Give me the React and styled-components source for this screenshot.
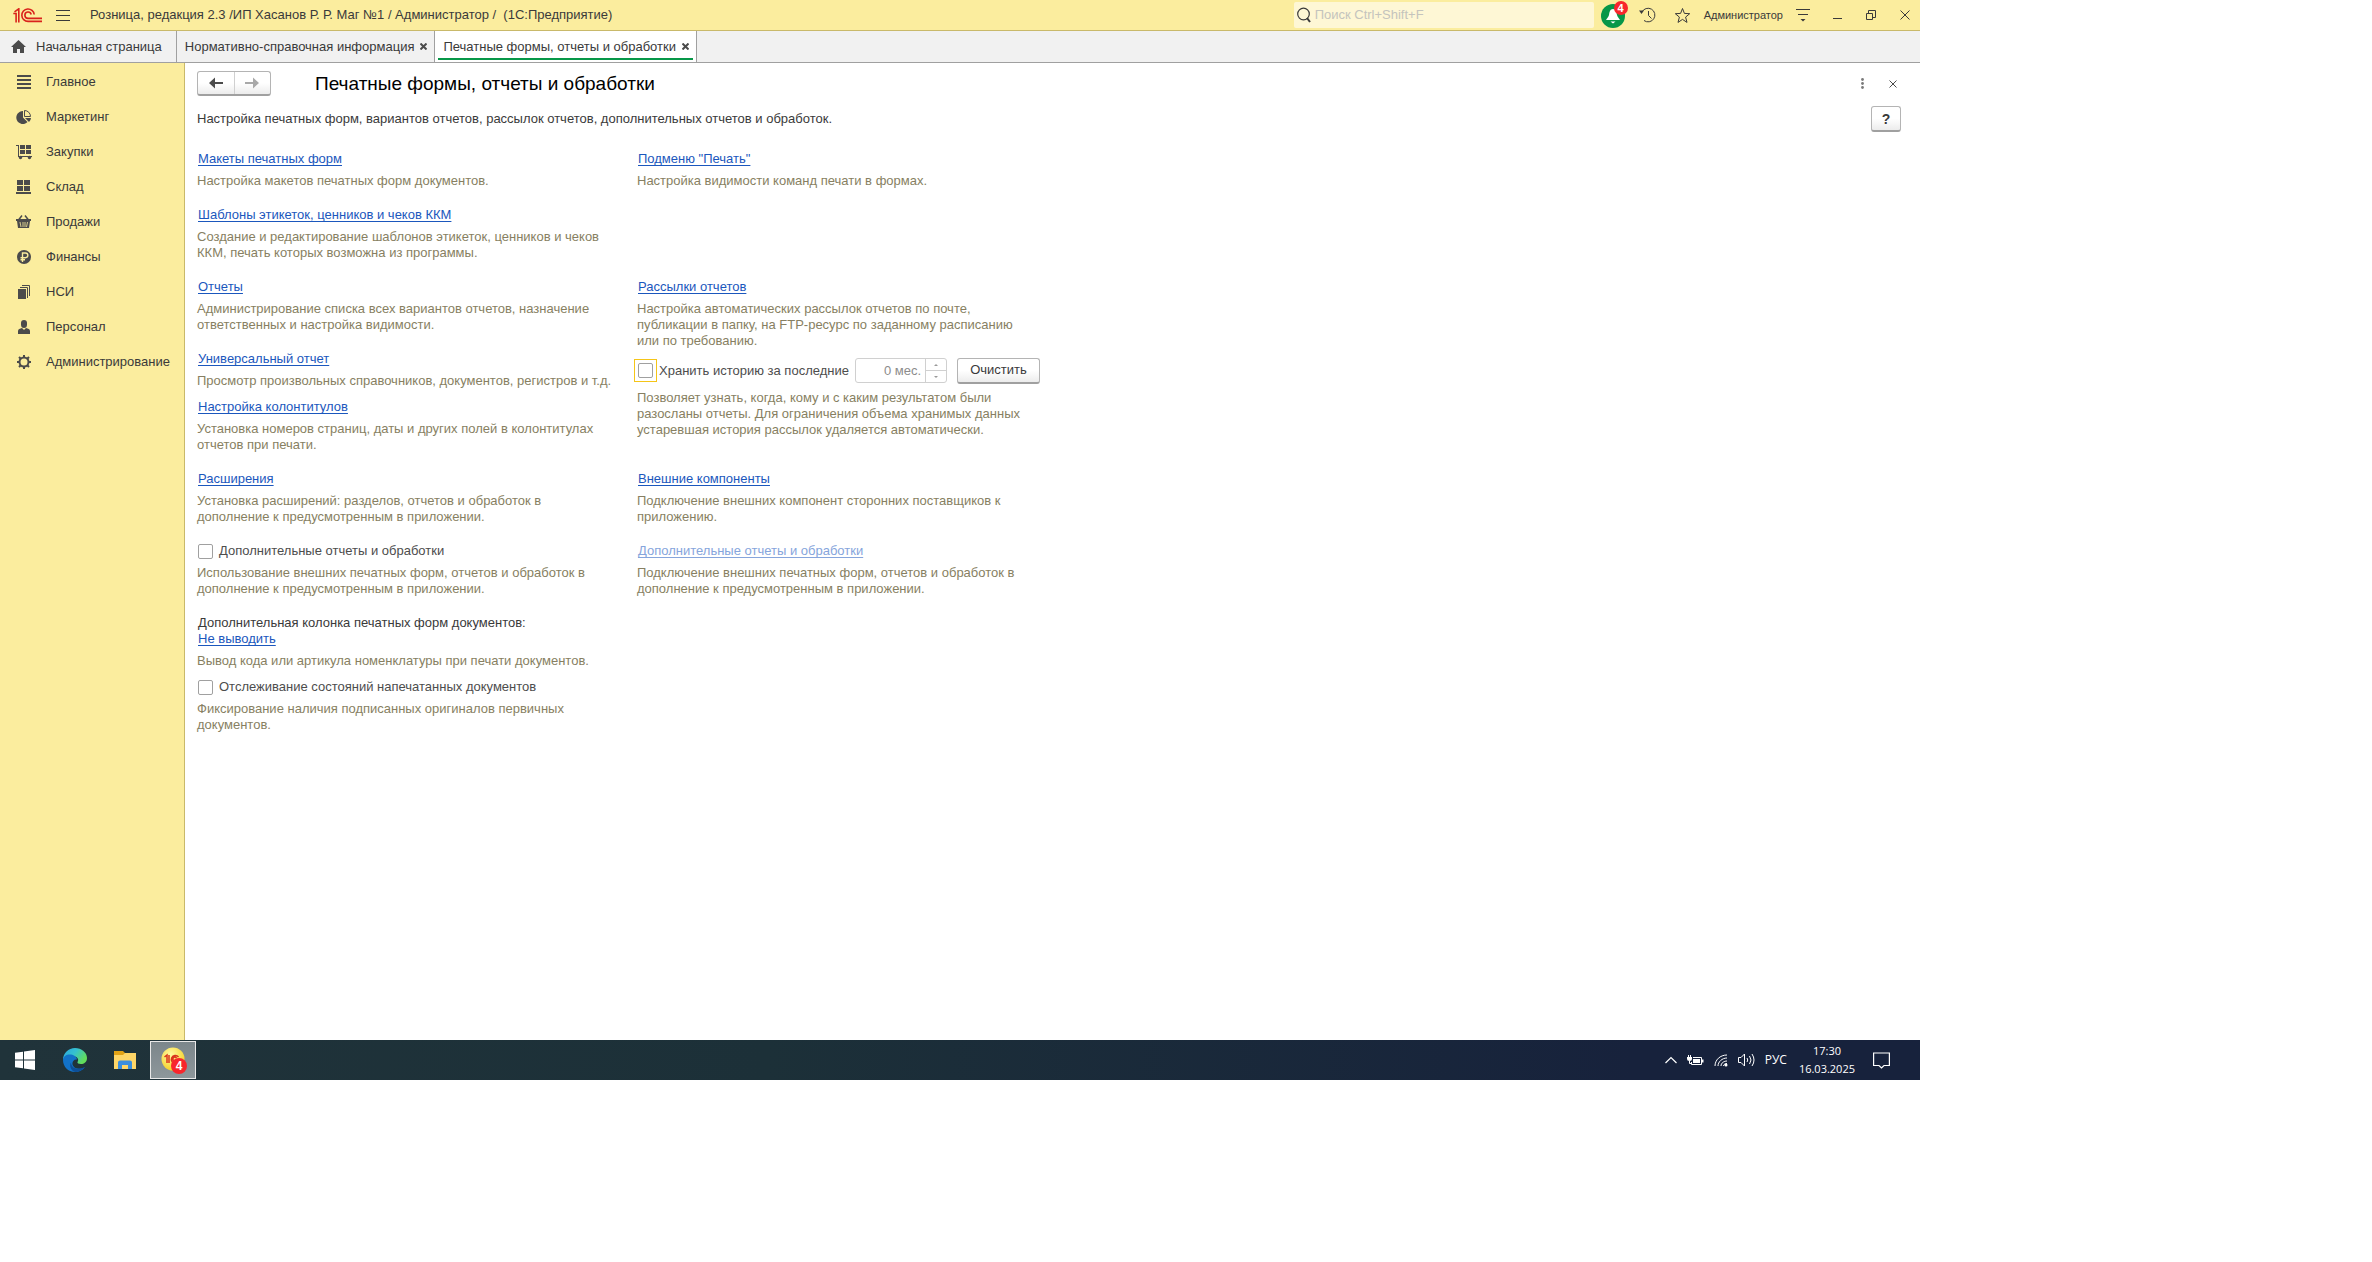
import styled, { createGlobalStyle, css } from "styled-components";

const GlobalStyle = createGlobalStyle`
    *, *::before, *::after {
        box-sizing: border-box;
    }

    body {
        margin: 0;
        background: #ffffff;
        font-family: "Liberation Sans", Arial, sans-serif;
        font-size: 13px;
        line-height: 16px;
        color: #3a3a3a;
    }

    button, input {
        font: inherit;
        color: inherit;
    }

    h1, p {
        margin: 0;
    }
`;

const sections = [
    {
        label: 'Главное',
        icon: <path d="M1 1h14v2H1zM1 5h14v2H1zM1 9h14v2H1zM1 13h14v2H1z" />
    },
    {
        label: 'Маркетинг',
        icon: (
            <>
                <path d="M7 2v6.500l4.500 4.500A6.500 6.500 0 1 1 7 2z" />
                <path d="M8.500 1.500v6h6a6 6 0 0 0-6-6z" fill="none" stroke="#4b4b4b" />
                <path d="M9 9h6a6 6 0 0 1-2 4z" />
            </>
        )
    },
    {
        label: 'Закупки',
        icon: (
            <>
                <path d="M0 1h3v11h13v1H2V2H0z" />
                <path d="M4 1h5v4H4zM10 1h5v4h-5zM4 6h5v4H4zM10 6h5v4h-5z" />
                <circle cx="4.500" cy="13.500" r="1.700" />
                <circle cx="13.500" cy="13.500" r="1.700" />
            </>
        )
    },
    {
        label: 'Склад',
        icon: <path d="M1 1h6v5H1zM8 1h6v5H8zM1 7h6v5H1zM8 7h6v5H8zM0 13h15v2H0z" />
    },
    {
        label: 'Продажи',
        icon: (
            <>
                <path d="M2.500 6L6 1.500M12.500 6L9 1.500" fill="none" stroke="#4b4b4b" strokeWidth="1.500" />
                <path d="M0 5h15v2h-1l-1 7H2L1 7H0z" />
                <path d="M4 8l1 5M7 8v5M9 8v5M11.500 8l-1 5" stroke="#fbed9e" strokeWidth=".8" />
            </>
        )
    },
    {
        label: 'Финансы',
        icon: (
            <>
                <circle cx="8" cy="8" r="7" />
                <path d="M6.500 13V4h3a2.300 2.300 0 0 1 0 4.700H4.500M4.500 10.700H9" fill="none" stroke="#fbed9e" strokeWidth="1.400" />
            </>
        )
    },
    {
        label: 'НСИ',
        icon: (
            <>
                <path d="M2 5h8v10H2z" />
                <path d="M4 3.500h7.500V14M6 1.500h7.500V12" fill="none" stroke="#4b4b4b" />
            </>
        )
    },
    {
        label: 'Персонал',
        icon: (
            <>
                <path d="M5 4a3 3 0 0 1 6 0v1.500a3 3.500 0 0 1-6 0z" />
                <path d="M2 15v-3c0-2 2-2.500 4-3l2 2 2-2c2 .5 4 1 4 3v3z" />
            </>
        )
    },
    {
        label: 'Администрирование',
        icon: (
            <>
                <circle cx="8" cy="8" r="4.500" fill="none" stroke="#4b4b4b" strokeWidth="2" />
                <path d="M8 1v3M8 12v3M1 8h3M12 8h3M3 3l2 2M11 11l2 2M3 13l2-2M11 5l2-2" stroke="#4b4b4b" strokeWidth="2" />
            </>
        )
    }
];

const LogoIcon = () => (
    <svg width="30" height="15" viewBox="0 0 30 15" fill="none" stroke="#d9221c" strokeWidth="1.600">
        <path d="M1.500 3.800L5.800.8V14.500M.3 5.500h2.800v9" />
        <path d="M21.200 6.500A6.200 6.200 0 1 0 15 13.400h14" />
        <path d="M18.200 6.500A3.200 3.200 0 1 0 15 10.400h14" />
    </svg>
);

const MenuIcon = () => (
    <svg width="14" height="13" viewBox="0 0 14 13" stroke="#3a3a3a" strokeWidth="1">
        <path d="M0 1.500h14M0 6.500h14M0 11.500h14" />
    </svg>
);

const HomeIcon = () => (
    <svg width="15" height="13" viewBox="0 0 15 13" fill="#4b4b4b">
        <path d="M7.500 0L15 7h-2v6H9V9H6v4H2V7H0z" />
    </svg>
);

const CrossIcon = ({ size = 7, width = 2, color = '#4b4b4b' }) => (
    <svg width={size} height={size} viewBox={`0 0 ${size} ${size}`} stroke={color} strokeWidth={width}>
        <path d={`M.5 .5L${size - 0.5} ${size - 0.5}M${size - 0.5} .5L.5 ${size - 0.5}`} />
    </svg>
);

const SearchIcon = () => (
    <svg width="14" height="16" viewBox="0 0 14 16" fill="none" stroke="#3a3a3a">
        <circle cx="6.500" cy="7" r="5.800" strokeWidth="1.200" />
        <path d="M10 11l3 4" strokeWidth="2" />
    </svg>
);

const BellIcon = () => (
    <svg width="28" height="28" viewBox="0 0 28 28">
        <circle cx="13" cy="15" r="12" fill="#079748" />
        <path d="M13 8c-3 0-3.500 3-4 6-.3 2-2 3-3 5h14c-1-2-2.700-3-3-5-.5-3-1-6-4-6z" fill="#ffffff" />
        <path d="M10.500 20.500h5l-2.500 2z" fill="#ffffff" />
    </svg>
);

const HistoryIcon = () => (
    <svg width="18" height="18" viewBox="0 0 18 18" fill="none" stroke="#3a3a3a">
        <path d="M3 6A6.800 6.800 0 1 1 5 14.500" />
        <path d="M9.500 5v4.500l3 3" />
        <path d="M0 4.500h5L2.500 8z" fill="#3a3a3a" stroke="none" />
    </svg>
);

const StarIcon = () => (
    <svg width="17" height="17" viewBox="0 0 17 17" fill="none" stroke="#3a3a3a">
        <path d="M8.500 1.500l1.900 4.900 5.300.3-4.100 3.400 1.400 5.300-4.500-3-4.500 3 1.400-5.300L1.300 6.700l5.300-.3z" />
    </svg>
);

const ServiceIcon = () => (
    <svg width="14" height="14" viewBox="0 0 14 14">
        <path d="M0 1.500h14M2 6.500h10" stroke="#3a3a3a" />
        <path d="M4.500 11h5L7 13.500z" fill="#3a3a3a" />
    </svg>
);

const MinimizeIcon = () => (
    <svg width="9" height="10" viewBox="0 0 9 10"><path d="M0 8.500h9" stroke="#3a3a3a" /></svg>
);

const RestoreIcon = () => (
    <svg width="10" height="10" viewBox="0 0 10 10" fill="none" stroke="#3a3a3a">
        <path d="M.5 3.500h6v6h-6zM2.500 3V.5h7v7H7" />
    </svg>
);

const ArrowIcon = ({ color, flip }) => (
    <svg width="14" height="12" viewBox="0 0 14 12" fill={color}>
        <path d={flip ? 'M14 6L8 .5V5H0v2h8v4.500z' : 'M0 6L6 .5V5h8v2H6v4.500z'} />
    </svg>
);

const DotsIcon = () => (
    <svg width="3" height="11" viewBox="0 0 3 11" fill="#7a7a7a">
        <circle cx="1.500" cy="1.500" r="1.400" />
        <circle cx="1.500" cy="5.500" r="1.400" />
        <circle cx="1.500" cy="9.500" r="1.400" />
    </svg>
);

const SpinArrow = ({ down }) => (
    <svg width="4" height="2" viewBox="0 0 4 2" fill="#9a9a9a">
        <path d={down ? 'M0 0h4L2 2z' : 'M0 2h4L2 0z'} />
    </svg>
);

const WindowsIcon = () => (
    <svg width="20" height="20" viewBox="0 0 20 20" fill="#ffffff">
        <path d="M0 2.800L8 1.700v7.800H0zM9 1.500L20 0v9.500H9zM0 10.500h8v7.800l-8-1.100zM9 10.500h11V20L9 18.500z" />
    </svg>
);

const EdgeIcon = () => (
    <svg width="24" height="24" viewBox="0 0 24 24">
        <defs>
            <linearGradient id="edgeTop" x1="0" y1="0" x2="1" y2="0.500">
                <stop offset="0" stopColor="#2ba5e0" />
                <stop offset="0.500" stopColor="#35c1d0" />
                <stop offset="1" stopColor="#62dd5a" />
            </linearGradient>
        </defs>
        <path d="M0 12C0 5 5.500 0 12 0s12 4.500 12 10c0 4-3 6-6 6-2.500 0-4-1-3.500-2 1.500-2 .5-5-3-5.500C6 8 1 9 0 12z" fill="url(#edgeTop)" />
        <path d="M0 12c0-4 4-6 8-5.500 3.500.5 6 3 6 5-5-1-7 7 0 9 3 .8 6 0 8-1.500C19.500 22.500 16 24 12 24 5 24 0 18.500 0 12z" fill="#1272c8" />
        <path d="M8 14.500C8 20 14 22.500 22 19c-3 4-7 5-10 5-4-1.500-6-6-4-9.500z" fill="#0d4f98" />
    </svg>
);

const FolderIcon = () => (
    <svg width="22" height="20" viewBox="0 0 22 20">
        <path d="M0 1h9l2 2h11v5H0z" fill="#e2a215" />
        <path d="M0 5h9l2-2h11v16H0z" fill="#ffd667" />
        <path d="M4 19v-6.500a2 2 0 0 1 2-2h10a2 2 0 0 1 2 2V19h-4v-4H8v4z" fill="#3b8ede" />
    </svg>
);

const CoinIcon = () => (
    <svg width="28" height="28" viewBox="0 0 28 28">
        <defs>
            <radialGradient id="coin" cx="0.400" cy="0.300" r="0.700">
                <stop offset="0" stopColor="#fffba0" />
                <stop offset="1" stopColor="#f5d02a" />
            </radialGradient>
        </defs>
        <circle cx="14" cy="13" r="11.500" fill="url(#coin)" />
        <g fill="none" stroke="#d9341c" strokeWidth="1.500">
            <path d="M5.500 11l2.500-2v8M10 9v8" />
            <path d="M19.500 11a4 4 0 1 0-3 6.500h5M17.500 12a2 2 0 1 0-1 3h4" />
        </g>
    </svg>
);

const ChevronIcon = () => (
    <svg width="12" height="8" viewBox="0 0 12 8" fill="none" stroke="#ffffff" strokeWidth="1.200">
        <path d="M.5 7L6 1.500 11.500 7" />
    </svg>
);

const BatteryIcon = () => (
    <svg width="17" height="13" viewBox="0 0 17 13" fill="none" stroke="#ffffff">
        <path d="M6 3.500h8.500v7h-10V8" />
        <path d="M6 5h7v4H6zM15 5.500h1.500v3H15z" fill="#ffffff" stroke="none" />
        <path d="M0 3h5v1.500a2.500 2.500 0 0 1-5 0z" fill="#ffffff" stroke="none" />
        <path d="M1.500 1v2M3.500 1v2M2.500 7v2.500h2" />
    </svg>
);

const WifiIcon = () => (
    <svg width="14" height="14" viewBox="0 0 14 14" fill="none" stroke="#ffffff">
        <path d="M1 13C1 7 6 2 13 2M4 13c0-4 4-8 9-8M7 13c0-3 3-5 6-5" />
        <path d="M9.500 13c.3-2 2-2.500 3.500-2.500" />
        <circle cx="12" cy="12" r="1.500" fill="#ffffff" stroke="none" />
    </svg>
);

const SpeakerIcon = () => (
    <svg width="17" height="14" viewBox="0 0 17 14" fill="none" stroke="#ffffff">
        <path d="M.5 4.500h2.500L6.500 1v12L3 9.500H.5z" />
        <path d="M9 5q1.500 2 0 4M11.500 3q3 4 0 8M14 1q4 6 0 12" />
    </svg>
);

const NoticeIcon = () => (
    <svg width="17" height="17" viewBox="0 0 17 17" fill="none" stroke="#ffffff" strokeWidth="1.200">
        <path d="M.6 1h15.800v12.500H11L8.500 16 6 13.500H.6z" />
    </svg>
);

const Setting = ({ title, disabled, children }) => (
    <Block>
        <BlockLink href="#" aria-disabled={disabled} $disabled={disabled}>{title}</BlockLink>
        <Description>{children}</Description>
    </Block>
);

const CheckSetting = ({ id, title, children }) => (
    <Block>
        <CheckLine>
            <Checkbox type="checkbox" id={id} />
            <label htmlFor={id}>{title}</label>
        </CheckLine>
        <Description>{children}</Description>
    </Block>
);

export default function App() {
    return (
        <Desktop>
            <GlobalStyle />
            <TitleBar>
                <LogoIcon />
                <IconButton aria-label="Главное меню"><MenuIcon /></IconButton>
                <WindowTitle>Розница, редакция 2.3 /ИП Хасанов Р. Р. Маг №1 / Администратор /&nbsp; (1С:Предприятие)</WindowTitle>
                <SearchBox>
                    <SearchIcon />
                    <SearchInput type="text" placeholder="Поиск Ctrl+Shift+F" aria-label="Поиск" />
                </SearchBox>
                <TitleActions>
                    <BellButton aria-label="Оповещения">
                        <BellIcon />
                        <BellBadge>4</BellBadge>
                    </BellButton>
                    <IconButton aria-label="История"><HistoryIcon /></IconButton>
                    <IconButton aria-label="Избранное"><StarIcon /></IconButton>
                    <UserName>Администратор</UserName>
                    <IconButton aria-label="Сервис"><ServiceIcon /></IconButton>
                </TitleActions>
                <WindowControls>
                    <IconButton aria-label="Свернуть"><MinimizeIcon /></IconButton>
                    <IconButton aria-label="Восстановить"><RestoreIcon /></IconButton>
                    <IconButton aria-label="Закрыть"><CrossIcon size={10} width={1} color="#3a3a3a" /></IconButton>
                </WindowControls>
            </TitleBar>

            <TabBar>
                <HomeTab><HomeIcon />Начальная страница</HomeTab>
                <Tab>
                    Нормативно-справочная информация
                    <IconButton aria-label="Закрыть вкладку"><CrossIcon /></IconButton>
                </Tab>
                <Tab $active>
                    Печатные формы, отчеты и обработки
                    <IconButton aria-label="Закрыть вкладку"><CrossIcon /></IconButton>
                </Tab>
            </TabBar>

            <Workspace>
                <Sidebar>
                    {sections.map(({ label, icon }) => (
                        <SidebarItem key={label} href="#">
                            <svg width="16" height="16" viewBox="0 0 16 16" fill="#4b4b4b">{icon}</svg>
                            {label}
                        </SidebarItem>
                    ))}
                </Sidebar>

                <Form>
                    <FormHeader>
                        <NavGroup>
                            <NavButton aria-label="Назад"><ArrowIcon color="#4b4b4b" /></NavButton>
                            <NavButton aria-label="Вперед"><ArrowIcon color="#a9a9a9" flip /></NavButton>
                        </NavGroup>
                        <FormTitle>Печатные формы, отчеты и обработки</FormTitle>
                        <FormTools>
                            <IconButton aria-label="Еще"><DotsIcon /></IconButton>
                            <IconButton aria-label="Закрыть форму"><CrossIcon size={8} width={1} /></IconButton>
                        </FormTools>
                    </FormHeader>

                    <IntroRow>
                        <p>Настройка печатных форм, вариантов отчетов, рассылок отчетов, дополнительных отчетов и обработок.</p>
                        <HelpButton aria-label="Справка">?</HelpButton>
                    </IntroRow>

                    <SettingsGrid>
                        <Setting title="Макеты печатных форм">Настройка макетов печатных форм документов.</Setting>
                        <Setting title={'Подменю "Печать"'}>Настройка видимости команд печати в формах.</Setting>

                        <Setting title="Шаблоны этикеток, ценников и чеков ККМ">
                            Создание и редактирование шаблонов этикеток, ценников и чеков<br />
                            ККМ, печать которых возможна из программы.
                        </Setting>
                        <div />

                        <Group>
                            <Setting title="Отчеты">
                                Администрирование списка всех вариантов отчетов, назначение<br />
                                ответственных и настройка видимости.
                            </Setting>
                            <TightGroup>
                                <Setting title="Универсальный отчет">
                                    Просмотр произвольных справочников, документов, регистров и т.д.
                                </Setting>
                                <Setting title="Настройка колонтитулов">
                                    Установка номеров страниц, даты и других полей в колонтитулах<br />
                                    отчетов при печати.
                                </Setting>
                            </TightGroup>
                        </Group>
                        <div>
                            <Setting title="Рассылки отчетов">
                                Настройка автоматических рассылок отчетов по почте,<br />
                                публикации в папку, на FTP-ресурс по заданному расписанию<br />
                                или по требованию.
                            </Setting>
                            <HistoryRow>
                                <FocusFrame>
                                    <Checkbox type="checkbox" id="keepHistory" />
                                </FocusFrame>
                                <HistoryLabel htmlFor="keepHistory">Хранить историю за последние</HistoryLabel>
                                <NumberField>
                                    <NumberInput type="text" defaultValue="0 мес." aria-label="Количество месяцев" disabled />
                                    <Spinner>
                                        <SpinButton aria-label="Больше" disabled><SpinArrow /></SpinButton>
                                        <SpinButton aria-label="Меньше" disabled><SpinArrow down /></SpinButton>
                                    </Spinner>
                                </NumberField>
                                <ClearButton>Очистить</ClearButton>
                            </HistoryRow>
                            <Description>
                                Позволяет узнать, когда, кому и с каким результатом были<br />
                                разосланы отчеты. Для ограничения объема хранимых данных<br />
                                устаревшая история рассылок удаляется автоматически.
                            </Description>
                        </div>

                        <Setting title="Расширения">
                            Установка расширений: разделов, отчетов и обработок в<br />
                            дополнение к предусмотренным в приложении.
                        </Setting>
                        <Setting title="Внешние компоненты">
                            Подключение внешних компонент сторонних поставщиков к<br />
                            приложению.
                        </Setting>

                        <CheckSetting id="extraReports" title="Дополнительные отчеты и обработки">
                            Использование внешних печатных форм, отчетов и обработок в<br />
                            дополнение к предусмотренным в приложении.
                        </CheckSetting>
                        <Setting title="Дополнительные отчеты и обработки" disabled>
                            Подключение внешних печатных форм, отчетов и обработок в<br />
                            дополнение к предусмотренным в приложении.
                        </Setting>

                        <TightGroup>
                            <div>
                                <FieldCaption>Дополнительная колонка печатных форм документов:</FieldCaption>
                                <Setting title="Не выводить">Вывод кода или артикула номенклатуры при печати документов.</Setting>
                            </div>
                            <CheckSetting id="trackState" title="Отслеживание состояний напечатанных документов">
                                Фиксирование наличия подписанных оригиналов первичных<br />
                                документов.
                            </CheckSetting>
                        </TightGroup>
                    </SettingsGrid>
                </Form>
            </Workspace>

            <Taskbar>
                <TaskButton aria-label="Пуск"><WindowsIcon /></TaskButton>
                <TaskButton aria-label="Edge"><EdgeIcon /></TaskButton>
                <TaskButton aria-label="Проводник"><FolderIcon /></TaskButton>
                <TaskButton aria-label="1С:Предприятие" $active>
                    <CoinIcon />
                    <CoinBadge>4</CoinBadge>
                </TaskButton>
                <Tray>
                    <ChevronIcon />
                    <BatteryIcon />
                    <WifiIcon />
                    <SpeakerIcon />
                    <Language>РУС</Language>
                    <Clock>
                        <span>17:30</span>
                        <span>16.03.2025</span>
                    </Clock>
                    <NoticeIcon />
                </Tray>
            </Taskbar>
        </Desktop>
    );
}

const Desktop = styled.div`
    display: flex;
    flex-direction: column;
    max-width: 1920px;
    min-height: 1080px;
`;

const Buttons = styled.button`
    border: none;
    background: none;
    padding: 0;
    cursor: pointer;
`;

const IconButton = styled(Buttons)`
    display: flex;
    align-items: center;
    justify-content: center;
`;

const TitleBar = styled.header`
    display: flex;
    align-items: center;
    height: 31px;
    padding: 0 10px 0 13px;
    background: #fbed9e;
    border-bottom: 1px solid #c9b96a;

    > button {
        margin-left: 13px;
    }
`;

const WindowTitle = styled.div`
    margin-left: 20px;
    flex: 1;
    white-space: pre;
`;

const SearchBox = styled.div`
    display: flex;
    align-items: center;
    gap: 4px;
    width: 300px;
    height: 26px;
    padding-left: 3px;
    background: #fef7d5;
    border-radius: 2px;
`;

const SearchInput = styled.input`
    flex: 1;
    border: none;
    outline: none;
    padding: 0;
    background: none;

    &::placeholder {
        color: #c4c4bd;
    }
`;

const TitleActions = styled.div`
    display: flex;
    align-items: center;
    gap: 17px;
    margin-left: 6px;
`;

const BellButton = styled(IconButton)`
    position: relative;
    margin-right: -6px;
`;

const badge = css`
    position: absolute;
    display: flex;
    align-items: center;
    justify-content: center;
    border-radius: 50%;
    background: #f8262c;
    color: #ffffff;
    font-family: "Liberation Sans", Arial, sans-serif;
    font-weight: bold;
`;

const BellBadge = styled.span`
    ${badge}
    top: 0;
    right: 0;
    width: 14px;
    height: 14px;
    font-size: 11px;
`;

const UserName = styled.span`
    font-size: 11px;
    margin: 0 -4px;
`;

const WindowControls = styled.div`
    display: flex;
    align-items: center;
    gap: 24px;
    margin-left: 23px;
`;

const TabBar = styled.nav`
    display: flex;
    height: 32px;
    background: #f1f1f1;
    border-bottom: 1px solid #a0a0a0;
`;

const Tab = styled.div`
    display: flex;
    align-items: center;
    gap: 6px;
    padding: 0 7px 0 8px;
    border-right: 1px solid #a0a0a0;
    background: ${props => props.$active ? '#ffffff' : 'none'};
    position: relative;

    &::after {
        content: '';
        display: ${props => props.$active ? 'block' : 'none'};
        position: absolute;
        left: 3px;
        right: 3px;
        bottom: 2px;
        height: 2px;
        background: #079748;
    }
`;

const HomeTab = styled(Tab)`
    gap: 10px;
    padding: 0 14px 0 11px;
`;

const Workspace = styled.div`
    display: flex;
    flex: 1;
`;

const Sidebar = styled.nav`
    width: 185px;
    padding-top: 1px;
    background: #fbed9e;
    border-right: 1px solid #c9b96a;
`;

const SidebarItem = styled.a`
    display: flex;
    align-items: center;
    gap: 14px;
    height: 35px;
    padding-left: 16px;
    color: inherit;
    text-decoration: none;
`;

const Form = styled.main`
    flex: 1;
    padding: 8px 19px 20px 12px;
`;

const FormHeader = styled.div`
    display: flex;
    align-items: center;
    height: 25px;
`;

const raised = css`
    border: 1px solid #b4b4b4;
    border-bottom: 2px solid #a0a0a0;
    border-radius: 3px;
    background: linear-gradient(#ffffff 50%, #ececec);
`;

const NavGroup = styled.div`
    ${raised}
    display: flex;
    width: 74px;
    height: 25px;
`;

const NavButton = styled(IconButton)`
    flex: 1;

    & + & {
        border-left: 1px solid #d0d0d0;
    }
`;

const FormTitle = styled.h1`
    margin-left: 44px;
    font-size: 19px;
    font-weight: normal;
    line-height: 24px;
    color: #000000;
`;

const FormTools = styled.div`
    display: flex;
    align-items: center;
    gap: 25px;
    margin-left: auto;
    padding-right: 4px;
`;

const IntroRow = styled.div`
    display: flex;
    align-items: center;
    justify-content: space-between;
    margin: 10px 0 19px;
`;

const HelpButton = styled(Buttons)`
    ${raised}
    width: 30px;
    height: 26px;
    font-size: 14px;
    font-weight: bold;
`;

const SettingsGrid = styled.div`
    display: grid;
    grid-template-columns: 440px 1fr;
    row-gap: 18px;
`;

const Group = styled.div`
    display: flex;
    flex-direction: column;
    gap: 18px;
`;

const TightGroup = styled(Group)`
    gap: 10px;
`;

const Block = styled.div`
    display: flex;
    flex-direction: column;
    align-items: flex-start;
    gap: 6px;
`;

const BlockLink = styled.a`
    margin-left: 1px;
    color: ${props => props.$disabled ? '#86a5dc' : '#1b57bd'};
    text-decoration: underline;
    text-underline-offset: 2px;
    text-decoration-skip-ink: none;
`;

const Description = styled.p`
    color: #877f62;
`;

const FieldCaption = styled.p`
    margin-left: 1px;
`;

const CheckLine = styled.div`
    display: flex;
    align-items: center;
    gap: 6px;
    height: 16px;
    margin-left: 1px;
    color: #4d4d4d;
`;

const Checkbox = styled.input`
    appearance: none;
    width: 15px;
    height: 15px;
    margin: 0;
    border: 1px solid #a0a0a0;
    border-radius: 2px;
    background: #ffffff;
`;

const HistoryRow = styled.div`
    display: flex;
    align-items: center;
    height: 27px;
    margin: 8px 0 6px -3px;
`;

const FocusFrame = styled.span`
    display: flex;
    align-items: center;
    justify-content: center;
    width: 23px;
    height: 23px;
    border: 1px solid #f5c518;
`;

const HistoryLabel = styled.label`
    width: 198px;
    padding-left: 2px;
    color: #4d4d4d;
`;

const NumberField = styled.div`
    display: flex;
    width: 92px;
    height: 25px;
    border: 1px solid #d0d0d0;
    border-radius: 3px;
`;

const NumberInput = styled.input`
    flex: 1;
    min-width: 0;
    border: none;
    padding: 0 4px;
    background: none;
    text-align: right;
    color: #8c8c8c;
`;

const Spinner = styled.div`
    display: flex;
    flex-direction: column;
    width: 21px;
    border-left: 1px solid #d0d0d0;
`;

const SpinButton = styled(IconButton)`
    flex: 1;

    & + & {
        border-top: 1px solid #d0d0d0;
    }
`;

const ClearButton = styled(Buttons)`
    ${raised}
    width: 83px;
    height: 26px;
    margin-left: 10px;
`;

const Taskbar = styled.footer`
    display: flex;
    align-items: center;
    height: 40px;
    background: linear-gradient(90deg, #20333a, #1c3038 40%, #17223c 85%);
    color: #ffffff;
    font-family: "Open Sans", "Segoe UI", sans-serif;
    font-size: 11px;
`;

const TaskButton = styled(IconButton)`
    position: relative;
    width: 50px;
    height: 40px;

    ${props => props.$active && css`
        width: 46px;
        height: 38px;
        border: 1px solid #e8e8e8;
        background: linear-gradient(#7b868b, #8d979b);
    `}
`;

const CoinBadge = styled.span`
    ${badge}
    right: 8px;
    bottom: 4px;
    width: 16px;
    height: 16px;
    font-size: 12px;
`;

const Tray = styled.div`
    display: flex;
    align-items: center;
    gap: 10px;
    margin-left: auto;
    padding-right: 30px;
`;

const Language = styled.span`
    font-size: 12px;
`;

const Clock = styled.div`
    display: flex;
    flex-direction: column;
    align-items: center;
    line-height: 18px;
    margin: 0 8px 0 2px;
`;
